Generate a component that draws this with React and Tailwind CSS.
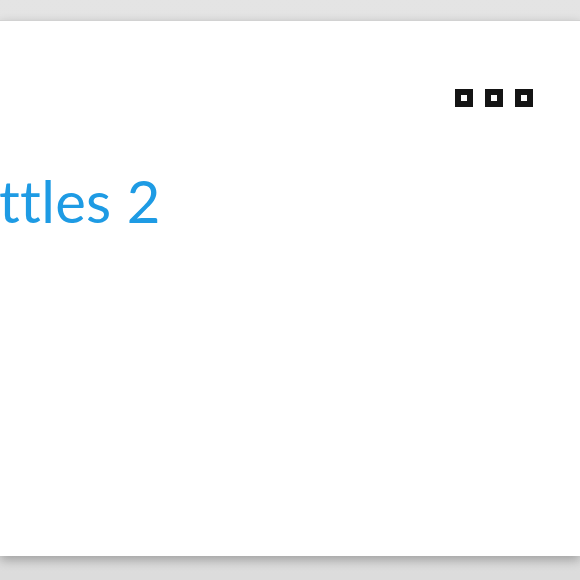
import React from 'react';

const MoreDots = () => (
  <div className="flex gap-[12px]">
    {[0, 1, 2].map((i) => (
      <span key={i} className="block w-[18px] h-[18px] border-[6px] border-[#141414] bg-white" />
    ))}
  </div>
);

const App = () => {
  return (
    <div className="w-[580px] h-[580px] bg-gradient-to-b from-[#e4e4e4] to-[#dcdcdc] pt-[20px] overflow-hidden">
      <div className="h-[536px] bg-white border-t border-[#d2d2d2] shadow-[0_4px_10px_rgba(0,0,0,0.28)] flex flex-col">
        <div className="flex justify-end pt-[68px] pr-[47px]">
          <MoreDots />
        </div>
        <h1
          className="mt-[65px] -ml-[1px] text-[58px] leading-none tracking-[0.3px] text-[#1e9be4] whitespace-nowrap"
          style={{ fontFamily: 'Lato, "Open Sans", sans-serif' }}
        >
          ttles 2
        </h1>
      </div>
    </div>
  );
};

export default App;
